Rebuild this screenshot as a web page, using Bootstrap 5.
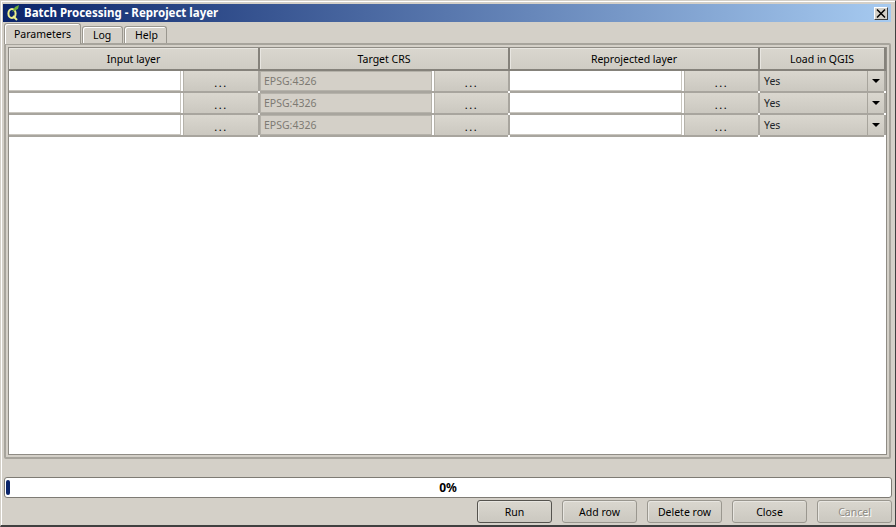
<!DOCTYPE html>
<html lang="en">
<head>
    <meta charset="UTF-8">
    <meta name="viewport" content="width=device-width, initial-scale=1.0">
    <title>Batch Processing - Reproject layer</title>
    <link href="https://cdn.jsdelivr.net/npm/bootstrap@5.3.0/dist/css/bootstrap.min.css" rel="stylesheet">
    <style>
        html, body {
            height: 100%;
            overflow: hidden;
        }
        body {
            background: #d4d0c8;
            color: #000;
            font-family: "Noto Sans", "Open Sans", sans-serif;
            font-size: 10.5px;
            line-height: 14px;
        }
        .qt-window {
            height: 527px;
            padding: 3px 4px 2px 3px;
            border: 1px solid #d4d0c8;
            border-right-color: #404040;
            border-bottom: 2px solid #404040;
            box-shadow: inset 1px 1px 0 #fff;
            box-sizing: border-box;
        }
        .qt-title {
            height: 18px;
            margin: 0 0 0 -1px;
            padding: 0 3px 0 4px;
            background: linear-gradient(90deg, #0a246a, #a6caf0);
            color: #fff;
            font-weight: 700;
            font-size: 11.5px;
            flex: none;
        }
        .qt-close {
            width: 14px;
            height: 13px;
            padding: 0;
            background: #d4d0c8;
            border: 1px solid;
            border-color: #fff #404040 #404040 #fff;
            display: flex;
            align-items: center;
            justify-content: center;
        }
        .qt-tabs {
            height: 21px;
            padding-left: 0;
            border-bottom: 0;
            flex: none;
            align-items: flex-end;
        }
        .qt-tabs .nav-link {
            height: 17px;
            margin: 0 0 0 1px;
            padding: 1px 0 0 10px;
            color: #000;
            background: #d4d0c8;
            border: 1px solid #9a978f;
            border-bottom: 0;
            border-radius: 3px 3px 0 0;
            box-shadow: inset 1px 1px 0 #fff;
        }
        .qt-tab-log {
            width: 41px;
        }
        .qt-tab-help {
            width: 43px;
        }
        .qt-tabs .nav-link.active {
            height: 21px;
            width: 77px;
            margin: 0 0 -1px 0;
            position: relative;
            z-index: 2;
            padding: 3px 0 0 9px;
            background: #d4d0c8;
            color: #000;
            border-color: #9a978f;
        }
        .qt-frame {
            height: 416px;
            padding: 2px;
            border: 2px solid #a7a49c;
            border-radius: 2px;
            flex: none;
        }
        .qt-grid {
            height: 100%;
            background: #fff;
            border: 1px solid #8f8c85;
        }
        .qt-table {
            width: 876px;
            margin: 0;
            table-layout: fixed;
            border-collapse: collapse;
        }
        .qt-table th {
            height: 22px;
            padding: 0;
            background: linear-gradient(#dad7cf, #cfccc4);
            color: #000;
            font-weight: 400;
            text-align: center;
            vertical-align: middle;
            border: 0;
            border-right: 2px solid #85827b;
            border-bottom: 2px solid #85827b;
            box-shadow: inset 1px 1px 0 #e8e6e1;
        }
        .qt-table td {
            height: 22px;
            padding: 0;
            background: #fff;
            border: 0;
            border-right: 2px solid #a8a59e;
            border-bottom: 2px solid #a8a59e;
            position: relative;
            vertical-align: top;
        }
        .qt-table td::after {
            content: "";
            position: absolute;
            right: -2px;
            bottom: -2px;
            width: 2px;
            height: 2px;
            background: #fff;
        }
        .qt-cell {
            height: 20px;
            gap: 2px;
        }
        .qt-input {
            width: 172px;
            height: 20px;
            min-height: 0;
            flex: none;
            padding: 0 4px;
            font-size: 10.5px;
            line-height: 14px;
            border: 0;
            border-radius: 0;
            background: #fff;
            box-shadow: inset -1px -1px 0 #c9c6bf;
        }
        .qt-input:disabled {
            background: #d4d0c8;
            color: #7d7a73;
            opacity: 1;
            box-shadow: inset 0 0 0 1px #b5b2aa;
        }
        .qt-dots {
            flex: 1;
            height: 20px;
            padding: 3px 0 0;
            font-size: 11px;
            line-height: 14px;
            letter-spacing: 1.5px;
            color: #000;
            background: linear-gradient(#dad7cf, #cbc8c0);
            border: 0;
            border-left: 1px solid #b5b2aa;
            border-radius: 0;
        }
        .qt-combo {
            height: 20px;
            padding-left: 4px;
            background: linear-gradient(#dad7cf, #cbc8c0);
        }
        .qt-arrow {
            width: 17px;
            height: 20px;
            border-left: 1px solid #a7a49c;
            display: flex;
            align-items: center;
            justify-content: center;
        }
        .qt-tri {
            width: 0;
            height: 0;
            border-left: 4px solid transparent;
            border-right: 4px solid transparent;
            border-top: 4px solid #000;
        }
        .qt-progress {
            height: 21px;
            margin: 18px -1px 0 0;
            background: #fff;
            border: 1px solid #7e7b74;
            border-radius: 3px;
            position: relative;
            flex: none;
        }
        .qt-progress .progress-bar {
            width: 4px;
            margin: 2px 0 2px 1px;
            background: #0a246a;
            border-radius: 2px;
        }
        .qt-pct {
            position: absolute;
            inset: 0;
            text-align: center;
            font-weight: 700;
            font-size: 12px;
            line-height: 20px;
        }
        .qt-buttons {
            margin: 2px -1px 0 0;
            gap: 10px;
            flex: none;
        }
        .qt-btn {
            width: 75px;
            height: 23px;
            padding: 0;
            font-size: 10.5px;
            line-height: 14px;
            color: #000;
            background: linear-gradient(#dad7cf, #cbc8c0);
            border: 1px solid #9a978f;
            border-radius: 3px;
            box-shadow: inset 1px 1px 0 #e8e6e1;
        }
        .qt-btn.qt-default {
            border-color: #55534e;
        }
        .qt-btn:disabled {
            color: #8f8c85;
            background: linear-gradient(#dad7cf, #cbc8c0);
            border-color: #9a978f;
            opacity: 1;
            text-shadow: 1px 1px 0 #fff;
        }
    </style>
</head>
<body>
<div class="qt-window d-flex flex-column">
    <div class="qt-title d-flex align-items-center justify-content-between">
        <div class="d-flex align-items-center gap-1">
            <svg width="13" height="16" viewBox="0 0 13 16">
                <ellipse cx="5" cy="8.5" rx="3.6" ry="4.6" fill="none" stroke="#eef08c" stroke-width="2"/>
                <path d="M6 11l4 4" stroke="#eef08c" stroke-width="2"/>
                <path d="M5 7l3-5 4-2-1 4z" fill="#6faf3a"/>
            </svg>
            <span>Batch Processing - Reproject layer</span>
        </div>
        <button class="qt-close" type="button" aria-label="Close">
            <svg width="10" height="9" viewBox="0 0 10 9"><path d="M1 .5l8 8M9 .5l-8 8" stroke="#000" stroke-width="1.5"/></svg>
        </button>
    </div>

    <ul class="nav nav-tabs qt-tabs">
        <li class="nav-item"><a class="nav-link active" href="#">Parameters</a></li>
        <li class="nav-item"><a class="nav-link qt-tab-log" href="#">Log</a></li>
        <li class="nav-item"><a class="nav-link qt-tab-help" href="#">Help</a></li>
    </ul>

    <div class="qt-frame">
        <div class="qt-grid">
            <table class="table qt-table">
                <colgroup>
                    <col style="width: 250px">
                    <col style="width: 250px">
                    <col style="width: 250px">
                    <col style="width: 126px">
                </colgroup>
                <thead>
                    <tr>
                        <th>Input layer</th>
                        <th>Target CRS</th>
                        <th>Reprojected layer</th>
                        <th>Load in QGIS</th>
                    </tr>
                </thead>
                <tbody id="rows"></tbody>
            </table>
        </div>
    </div>

    <div class="progress qt-progress">
        <div class="progress-bar" role="progressbar"></div>
        <div class="qt-pct">0%</div>
    </div>

    <div class="d-flex justify-content-end qt-buttons">
        <button class="btn qt-btn qt-default" type="button">Run</button>
        <button class="btn qt-btn" type="button">Add row</button>
        <button class="btn qt-btn" type="button">Delete row</button>
        <button class="btn qt-btn" type="button">Close</button>
        <button class="btn qt-btn" type="button" disabled>Cancel</button>
    </div>
</div>

<script>
    const rows = document.getElementById('rows');
    for (let i = 0; i < 3; i++) {
        const tr = document.createElement('tr');
        tr.innerHTML = `
            <td><div class="d-flex qt-cell"><input class="form-control qt-input" type="text"><button class="btn qt-dots" type="button">...</button></div></td>
            <td><div class="d-flex qt-cell"><input class="form-control qt-input" type="text" value="EPSG:4326" disabled><button class="btn qt-dots" type="button">...</button></div></td>
            <td><div class="d-flex qt-cell"><input class="form-control qt-input" type="text"><button class="btn qt-dots" type="button">...</button></div></td>
            <td><div class="d-flex align-items-center justify-content-between qt-combo"><span>Yes</span><span class="qt-arrow"><span class="qt-tri"></span></span></div></td>
        `;
        rows.appendChild(tr);
    }
</script>
<script src="https://cdn.jsdelivr.net/npm/bootstrap@5.3.0/dist/js/bootstrap.bundle.min.js"></script>
</body>
</html>
